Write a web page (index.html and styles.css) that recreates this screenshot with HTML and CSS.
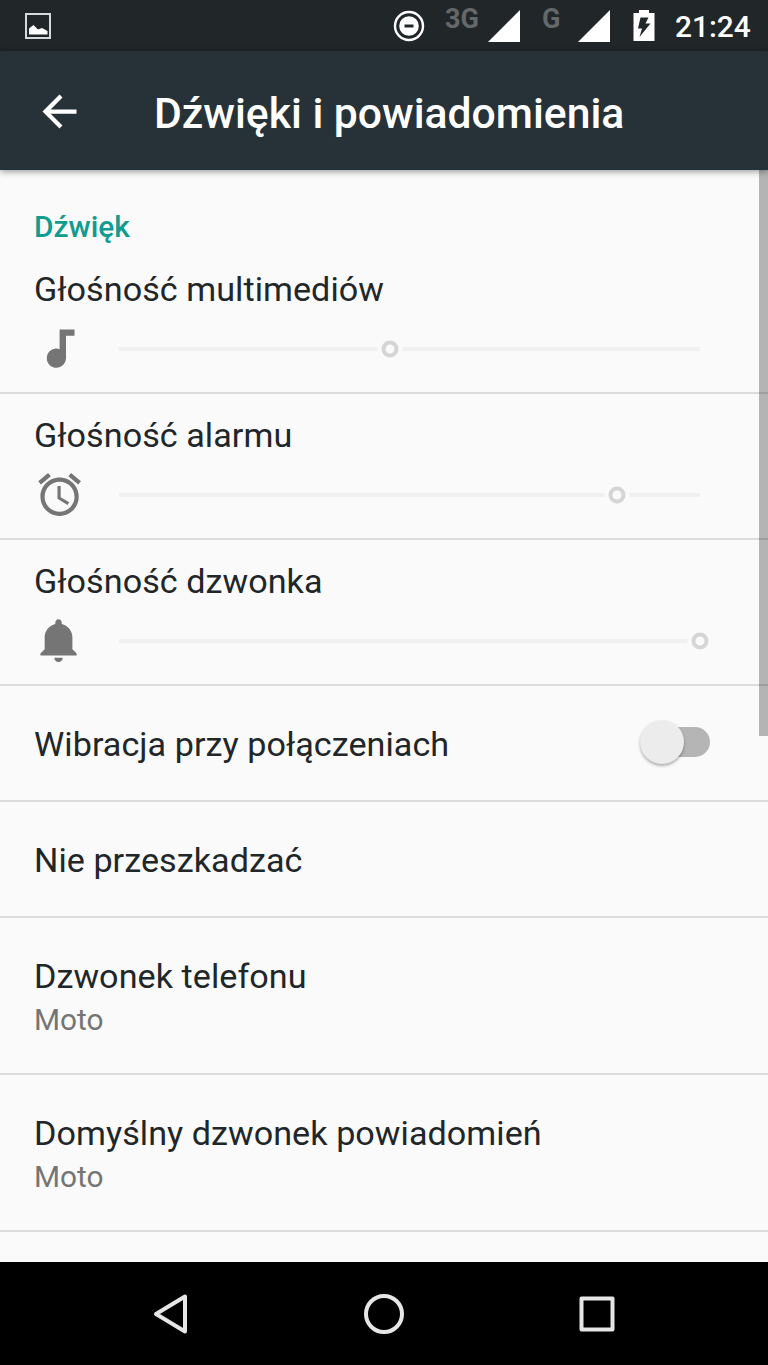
FILE: index.html
```html
<!DOCTYPE html>
<html lang="pl">
<head>
    <meta charset="UTF-8">
    <meta name="viewport" content="width=device-width, initial-scale=1.0">
    <title>Dźwięki i powiadomienia</title>
    <link rel="stylesheet" href="styles.css">
</head>
<body>

<div class="status-bar">
    <svg class="icon-picture" width="26" height="26" viewBox="0 0 26 26">
        <rect x="1" y="1" width="24" height="24" fill="none" stroke="#d5dada" stroke-width="2"/>
        <path d="M4 21.500V15.500L8.500 12L13 16.500L17 15L22.500 18V21.500z" fill="#fff"/>
    </svg>
    <svg class="icon-dnd" width="32" height="32" viewBox="0 0 32 32">
        <circle cx="16" cy="16" r="14" fill="none" stroke="#fff" stroke-width="2.400"/>
        <circle cx="16" cy="16" r="9.800" fill="#fff"/>
        <rect x="11.500" y="14.500" width="9" height="3" fill="#212629"/>
    </svg>
    <span class="network network-3g">3G</span>
    <svg class="signal" width="32" height="32" viewBox="0 0 32 32"><path d="M32 0V32H0z" fill="#fff"/></svg>
    <span class="network network-g">G</span>
    <svg class="signal" width="32" height="32" viewBox="0 0 32 32"><path d="M32 0V32H0z" fill="#fff"/></svg>
    <svg class="battery" width="22" height="32" viewBox="0 0 22 32">
        <path d="M6 0H16V3H21.500V31H.5V3H6z" fill="#fff"/>
        <path d="M7.500 7.500H15.500L12.500 13.500H17.500L6.500 27L9 18.500H5z" fill="#212629"/>
    </svg>
    <span class="clock">21:24</span>
</div>

<header class="app-bar">
    <svg class="back" width="51" height="51" viewBox="0 0 24 24">
        <path d="M20 11H7.830l5.590-5.590L12 4l-8 8 8 8 1.410-1.410L7.830 13H20v-2z" fill="#fff"/>
    </svg>
    <h1>Dźwięki i powiadomienia</h1>
</header>

<main class="content">
    <h2>Dźwięk</h2>

    <div class="row volume">
        <div class="title">Głośność multimediów</div>
        <div class="slider-row">
            <svg class="row-icon" viewBox="0 0 24 24"><path d="M12 3v9.280c-.47-.17-.97-.28-1.500-.28C8.010 12 6 14.010 6 16.500S8.010 21 10.500 21c2.310 0 4.200-1.750 4.450-4H15V6h4V3h-7z"/></svg>
            <div class="slider"><span class="thumb" style="left: 46.670%"></span></div>
        </div>
    </div>

    <div class="row volume">
        <div class="title">Głośność alarmu</div>
        <div class="slider-row">
            <svg class="row-icon" viewBox="0 0 24 24"><path d="M22 5.720l-4.600-3.860-1.290 1.530 4.600 3.860L22 5.720zM7.880 3.390L6.600 1.860 2 5.710l1.290 1.530 4.590-3.850zM12.500 8H11v6l4.750 2.850.75-1.230-4-2.370V8zM12 4c-4.970 0-9 4.030-9 9s4.020 9 9 9c4.970 0 9-4.030 9-9s-4.030-9-9-9zm0 16c-3.870 0-7-3.130-7-7s3.130-7 7-7 7 3.130 7 7-3.130 7-7 7z"/></svg>
            <div class="slider"><span class="thumb" style="left: 85.710%"></span></div>
        </div>
    </div>

    <div class="row volume">
        <div class="title">Głośność dzwonka</div>
        <div class="slider-row">
            <svg class="row-icon" viewBox="0 0 24 24"><path d="M11.500 22c1.100 0 2-.9 2-2h-4c0 1.100.9 2 2 2zm6.500-6v-5.500c0-3.070-2.130-5.640-5-6.320V3.500c0-.83-.67-1.500-1.500-1.500S10 2.670 10 3.500v.68c-2.870.68-5 3.250-5 6.320V16l-2 2v1h17v-1l-2-2z"/></svg>
            <div class="slider"><span class="thumb" style="left: 100%"></span></div>
        </div>
    </div>

    <div class="row single">
        <div class="title">Wibracja przy połączeniach</div>
        <div class="switch"><span class="switch-thumb"></span></div>
    </div>

    <div class="row single">
        <div class="title">Nie przeszkadzać</div>
    </div>

    <div class="row double">
        <div class="title">Dzwonek telefonu</div>
        <div class="summary">Moto</div>
    </div>

    <div class="row double">
        <div class="title">Domyślny dzwonek powiadomień</div>
        <div class="summary">Moto</div>
    </div>

    <div class="scrollbar"></div>
</main>

<nav class="nav-bar">
    <svg width="44" height="44" viewBox="0 0 44 44"><path d="M36 4.500V39.500L7 22z"/></svg>
    <svg width="44" height="44" viewBox="0 0 44 44"><circle cx="22" cy="22" r="18"/></svg>
    <svg width="44" height="44" viewBox="0 0 44 44"><rect x="6.500" y="6.500" width="31" height="31"/></svg>
</nav>

</body>
</html>
```
FILE: styles.css
```css
* {
    box-sizing: border-box;
}

body {
    margin: 0;
    height: 1365px;
    display: flex;
    flex-direction: column;
    overflow: hidden;
    font-family: Roboto, sans-serif;
    background-color: #fafafa;
    color: #212629;
}

svg {
    display: block;
    flex: none;
}

.status-bar {
    height: 51px;
    flex: none;
    display: flex;
    align-items: flex-start;
    background-color: #212629;
    color: #fff;
}

.icon-picture {
    margin: 13px 0 0 25px;
}

.icon-dnd {
    margin: 10px 0 0 341.500px;
}

.network {
    font-size: 27px;
    line-height: 32px;
    font-weight: 700;
    color: #64686a;
    margin-top: 3px;
}

.network-3g {
    width: 43px;
    margin-left: 20.500px;
}

.network-g {
    width: 36px;
    margin-left: 22px;
}

.signal {
    margin-top: 10px;
}

.battery {
    margin: 10px 0 0 23px;
}

.clock {
    margin: 7px 0 0 20px;
    font-size: 29.870px;
    line-height: 40px;
    font-weight: 500;
}

.app-bar {
    height: 119px;
    flex: none;
    display: flex;
    align-items: center;
    padding: 4px 34px 0;
    background-color: #263238;
    color: #fff;
    box-shadow: 0 1px 7px rgba(0, 0, 0, 0.45);
    z-index: 1;
}

.back {
    margin-bottom: 3px;
}

h1 {
    margin: 0 0 0 69px;
    font-size: 42.670px;
    line-height: 50px;
    font-weight: 500;
}

.content {
    position: relative;
    flex: 1;
    min-height: 0;
    overflow: hidden;
}

h2 {
    margin: 0;
    padding: 39px 34px 0;
    height: 78px;
    font-size: 29.870px;
    line-height: 35px;
    font-weight: 500;
    color: #109c8e;
}

.row {
    padding: 0 34px;
    border-bottom: 2px solid #dcdcdc;
}

.title {
    font-size: 34.130px;
    line-height: 40px;
    letter-spacing: 0.050px;
}

.summary {
    font-size: 29.870px;
    line-height: 35px;
    color: #757575;
}

.volume {
    height: 146px;
    padding-top: 21px;
}

.slider-row {
    display: flex;
    align-items: center;
    margin-top: 14px;
}

.row-icon {
    width: 51.200px;
    height: 51.200px;
    fill: #757575;
}

.slider {
    position: relative;
    width: 581px;
    height: 4px;
    margin-left: 34px;
    background-color: #f0f0f0;
}

/* outer ring in page colour leaves a gap in the track */
.thumb {
    position: absolute;
    top: 2px;
    width: 17px;
    height: 17px;
    border: 4px solid #d5d5d5;
    border-radius: 50%;
    background-color: #fafafa;
    box-shadow: 0 0 0 4px #fafafa;
    transform: translate(-50%, -50%);
}

.single {
    height: 116px;
    display: flex;
    align-items: center;
    justify-content: space-between;
    padding-top: 1px;
}

.switch {
    position: relative;
    width: 58px;
    height: 30px;
    margin-right: 24px;
    margin-top: -3px;
    border-radius: 15px;
    background-color: #b5b5b5;
}

.switch-thumb {
    position: absolute;
    left: -12px;
    top: -7px;
    width: 44px;
    height: 44px;
    border-radius: 50%;
    background-color: #ececec;
    box-shadow: 0 2px 3px rgba(0, 0, 0, 0.3);
}

.double {
    height: 157px;
    padding-top: 38px;
}

.double .summary {
    margin-top: 6px;
}

.scrollbar {
    position: absolute;
    top: 0;
    right: 0;
    width: 9px;
    height: 566px;
    background-color: rgba(0, 0, 0, 0.28);
}

.nav-bar {
    height: 103px;
    flex: none;
    display: flex;
    align-items: center;
    justify-content: center;
    gap: 169px;
    background-color: #000;
}

.nav-bar svg {
    fill: none;
    stroke: #e6e6e6;
    stroke-width: 4;
    stroke-linejoin: round;
}
```
